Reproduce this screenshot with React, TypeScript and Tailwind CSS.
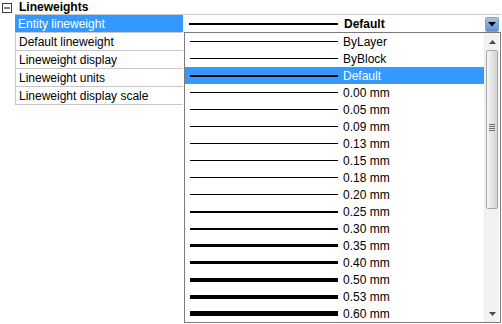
import React from 'react';

const items = [
  { label: 'ByLayer', w: 1 },
  { label: 'ByBlock', w: 1 },
  { label: 'Default', w: 2, selected: true },
  { label: '0.00 mm', w: 1 },
  { label: '0.05 mm', w: 1 },
  { label: '0.09 mm', w: 1 },
  { label: '0.13 mm', w: 1 },
  { label: '0.15 mm', w: 1 },
  { label: '0.18 mm', w: 1 },
  { label: '0.20 mm', w: 1 },
  { label: '0.25 mm', w: 2 },
  { label: '0.30 mm', w: 2 },
  { label: '0.35 mm', w: 3 },
  { label: '0.40 mm', w: 3 },
  { label: '0.50 mm', w: 4 },
  { label: '0.53 mm', w: 4 },
  { label: '0.60 mm', w: 5 },
];

const rows = [
  'Entity lineweight',
  'Default lineweight',
  'Lineweight display',
  'Lineweight units',
  'Lineweight display scale',
];

const App = () => {
  return (
    <div
      className="w-[502px] h-[324px] bg-white overflow-hidden text-[12px] text-black"
      style={{ fontFamily: '"Liberation Sans", Arial, sans-serif' }}
    >
      {/* Category header */}
      <div className="h-[14px] flex items-center">
        <svg width="10" height="10" viewBox="0 0 10 10" className="ml-[2px] mt-[1px]">
          <rect x="0.5" y="0.5" width="9" height="9" fill="white" stroke="#3c3c3c" />
          <line x1="2" y1="5" x2="8" y2="5" stroke="#000" strokeWidth="1" />
        </svg>
        <span className="ml-[7px] font-bold leading-[14px]">Lineweights</span>
      </div>

      <div className="flex items-start">
        {/* Property names */}
        <div className="ml-[15px] w-[168px] border-t border-[#c8c8c8]">
          {rows.map((r, i) => (
            <div
              key={r}
              className={
                i === 0
                  ? 'h-[18px] flex items-center pl-[3px] bg-[#3399ff] text-white border-b border-[#c8c8c8]'
                  : 'h-[18px] flex items-center pl-[3px] border-l border-b border-[#c8c8c8]'
              }
            >
              {r}
            </div>
          ))}
        </div>

        {/* Value column */}
        <div className="w-[318px]">
          {/* Combo */}
          <div className="h-[18px] border-t border-[#c8c8c8] flex items-center">
            <div className="ml-[6px] w-[149px] h-[2px] bg-black" />
            <span className="ml-[6px] font-bold">Default</span>
            <div className="ml-auto mr-[2px] w-[14px] h-[15px] mt-[1px] border border-[#7fa2cc] rounded-[2px] bg-gradient-to-b from-[#a9c4ea] to-[#5f90cf] flex items-center justify-center">
              <svg width="8" height="5" viewBox="0 0 8 5">
                <path d="M0 0 H8 L4 4.5 Z" fill="#000" />
              </svg>
            </div>
          </div>

          {/* Drop list */}
          <div className="ml-[1px] w-[317px] h-[291px] border border-[#7a7a7a] flex">
            <div className="w-[299px]">
              {items.map((it) => (
                <div
                  key={it.label}
                  className={
                    it.selected
                      ? 'h-[17px] flex items-center bg-[#3399ff] text-white'
                      : 'h-[17px] flex items-center'
                  }
                >
                  <div className="ml-[5px] w-[148px] bg-black" style={{ height: it.w }} />
                  <span className="ml-[5px]">{it.label}</span>
                </div>
              ))}
            </div>

            {/* Scrollbar */}
            <div className="w-[15px] bg-[#f2f2f2] border-l border-[#ececec] flex flex-col">
              <div className="h-[17px] flex items-center justify-center">
                <svg width="7" height="4" viewBox="0 0 7 4">
                  <path d="M3.5 0 L7 4 H0 Z" fill="#4d4d4d" />
                </svg>
              </div>
              <div className="mx-[1px] h-[159px] border border-[#a8a8a8] rounded-[2px] bg-gradient-to-r from-[#f6f6f6] via-[#e4e4e4] to-[#d2d2d2] flex items-center justify-center">
                <div className="flex flex-col gap-[1px] mt-[-5px]">
                  <div className="w-[6px] h-[1px] bg-[#6e6e6e]" />
                  <div className="w-[6px] h-[1px] bg-[#6e6e6e]" />
                  <div className="w-[6px] h-[1px] bg-[#6e6e6e]" />
                  <div className="w-[6px] h-[1px] bg-[#6e6e6e]" />
                </div>
              </div>
              <div className="flex-1" />
              <div className="h-[17px] flex items-center justify-center">
                <svg width="7" height="4" viewBox="0 0 7 4">
                  <path d="M0 0 H7 L3.5 4 Z" fill="#4d4d4d" />
                </svg>
              </div>
            </div>
          </div>
        </div>
      </div>
    </div>
  );
};

export default App;
